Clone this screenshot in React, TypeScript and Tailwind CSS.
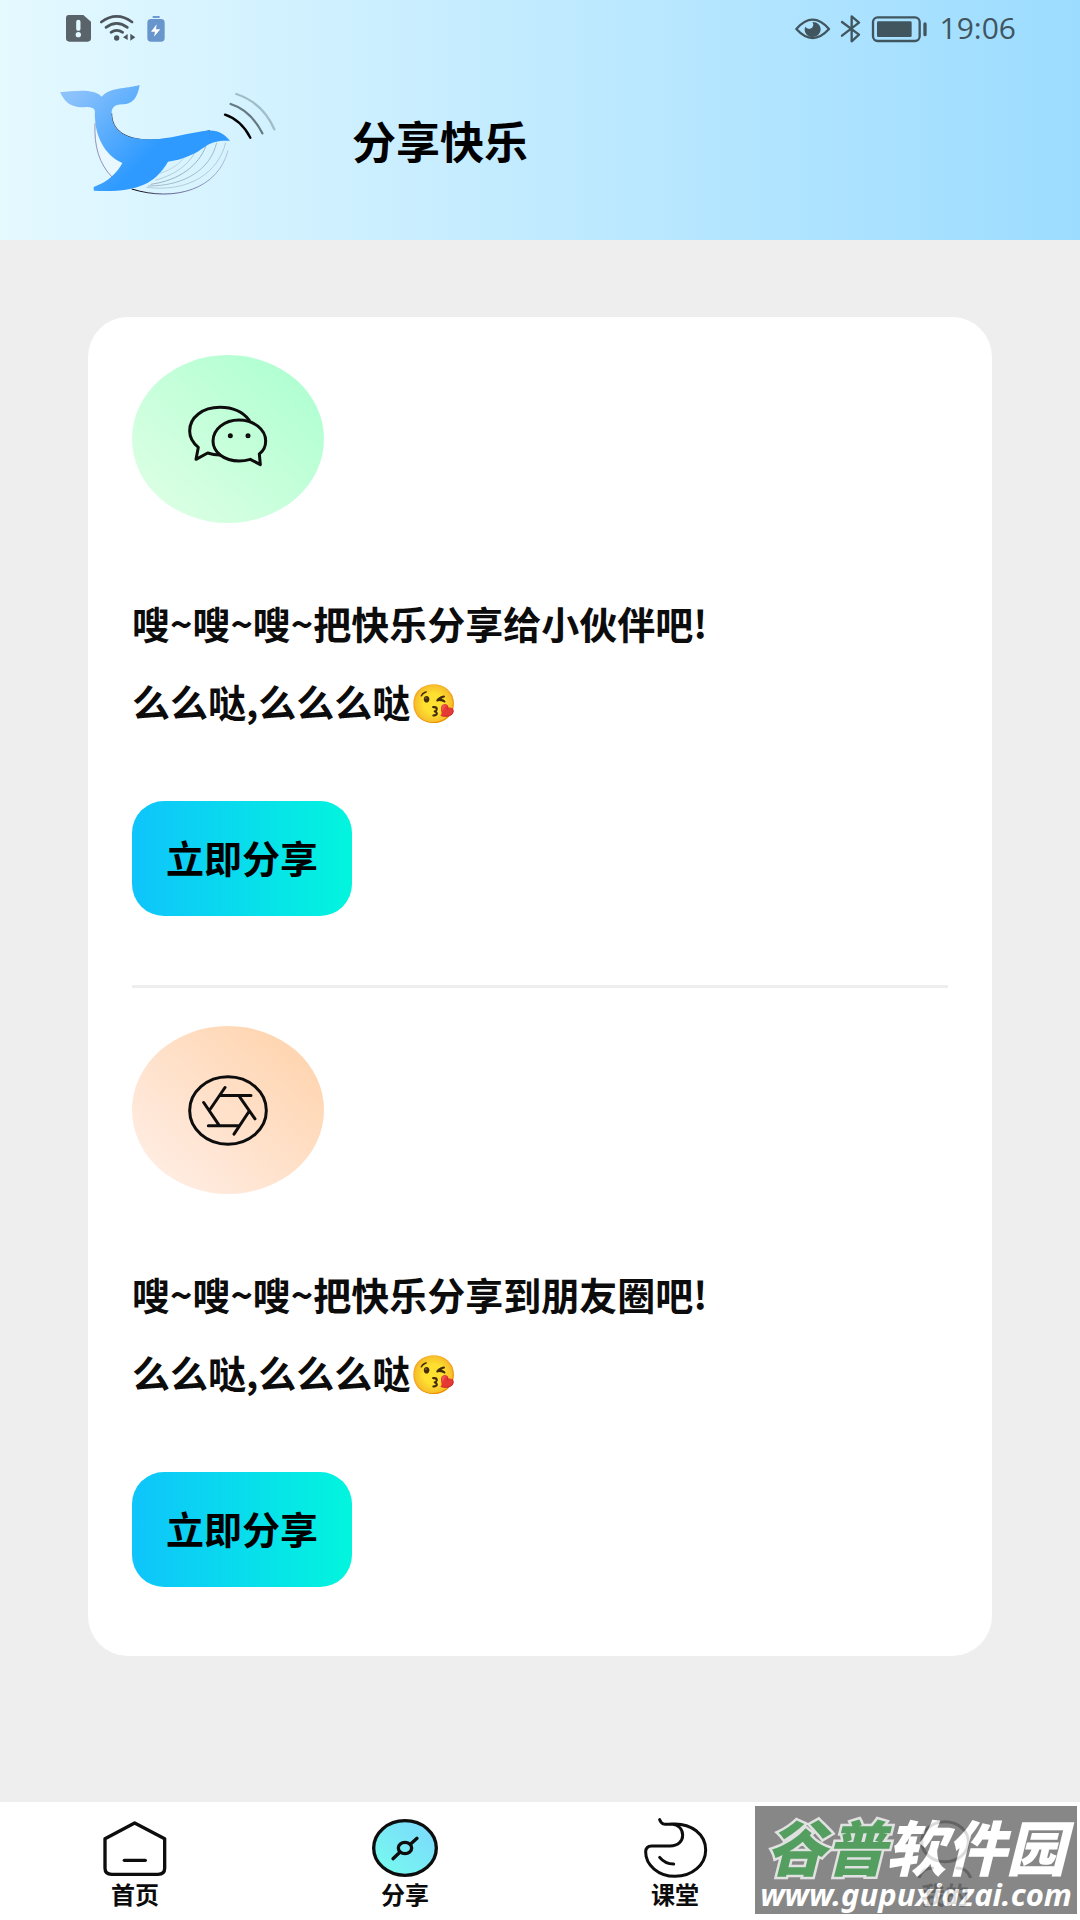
import type { ReactNode } from "react";

const INK = "#0d0d0d";

const posts = [
  {
    id: "friend",
    icon: <WechatIcon />,
    badge: "from-[#e2ffe6] to-[#a9ffcf]",
    lines: ["嗖~嗖~嗖~把快乐分享给小伙伴吧!", "么么哒,么么么哒😘"],
  },
  {
    id: "moments",
    icon: <ApertureIcon />,
    badge: "from-[#fff0ea] to-[#ffd1a8]",
    lines: ["嗖~嗖~嗖~把快乐分享到朋友圈吧!", "么么哒,么么么哒😘"],
  },
];

const tabs = [
  { label: "首页", icon: <HomeIcon /> },
  { label: "分享", icon: <CompassIcon />, active: true },
  { label: "课堂", icon: <ClassIcon /> },
  { label: "我的", icon: <UserIcon /> },
];

export default function App() {
  return (
    <div className="flex min-h-screen flex-col bg-[#eee] font-['Noto_Sans_CJK_SC',sans-serif] text-[#0c0c0c]">
      <header className="bg-linear-to-r/srgb from-[#e5f9ff] to-[#9cdcff] pb-11">
        <StatusBar />
        <div className="flex items-center pt-7 pl-15">
          <WhaleLogo />
          <h1 className="ml-19 text-[44px] leading-none font-bold text-black">分享快乐</h1>
        </div>
      </header>

      <main className="px-22 pt-[77px] pb-20">
        <div className="divide-y-3 divide-[#eee] rounded-[40px] bg-white px-11">
          {posts.map((p) => (
            <Post key={p.id} icon={p.icon} badge={p.badge} lines={p.lines} />
          ))}
        </div>
      </main>

      <nav className="relative mt-auto grid grid-cols-4 bg-white">
        {tabs.map((t) => (
          <a
            key={t.label}
            href="#"
            aria-current={t.active ? "page" : undefined}
            className="flex flex-col items-center gap-0.5 pt-4 pb-3 text-2xl leading-7 font-bold"
          >
            {t.icon}
            {t.label}
          </a>
        ))}
        <Watermark />
      </nav>
    </div>
  );
}

function Post({ icon, badge, lines }: { icon: ReactNode; badge: string; lines: string[] }) {
  return (
    <section className="flex flex-col items-start pt-[38px] pb-[69px]">
      <div
        className={`flex h-42 w-48 items-center justify-center rounded-[50%] bg-linear-to-tr/srgb ${badge}`}
      >
        {icon}
      </div>
      <div className="mt-[61px] text-[38px] leading-[78px] font-bold">
        {lines.map((l) => (
          <p key={l}>{l}</p>
        ))}
      </div>
      <button
        type="button"
        className="mt-[61px] h-[115px] w-55 rounded-[32px] bg-linear-to-r/srgb from-[#0fc4fb] to-[#02f5de] pb-1 text-[38px] font-bold text-black"
      >
        立即分享
      </button>
    </section>
  );
}

function StatusBar() {
  return (
    <div className="flex h-14 items-center justify-between pr-16 pl-16">
      <svg viewBox="72 36 312 96" className="h-8 w-26" fill="none">
        <path
          d="M86 45h44l23 20v50q0 10-10 10H88q-10 0-10-10V54q0-9 8-9z"
          fill="#596369"
        />
        <path d="M115 66v20" stroke="#e2f7ff" strokeWidth="13" strokeLinecap="round" />
        <circle cx="115" cy="104" r="8" fill="#e2f7ff" />
        <g stroke="#4b555b" strokeWidth="8" strokeLinecap="round">
          <path d="M184 66q46-34 92 0" />
          <path d="M198 82q32-24 64 0" />
          <path d="M213 97q17-12 35 0" />
        </g>
        <circle cx="230" cy="114" r="8" fill="#4b555b" />
        <path d="M249 112l14-10v18zM271 101l15 11-15 10z" fill="#4b555b" />
        <path d="M338 48h21v6h-21z" fill="#6c9bd0" />
        <rect x="322" y="57" width="52" height="68" rx="11" fill="#6795cc" />
        <path d="M350 73l-17 22h12l-3 15 19-22h-13z" fill="#fff" />
      </svg>
      <div className="flex items-center gap-3 text-[#41555f]">
        <svg viewBox="39 42 402 87" className="h-[29px] w-[134px]" fill="none" stroke="currentColor">
          <path d="M46 87q49-56 98 0-49 54-98 0z" strokeWidth="7" strokeLinejoin="round" />
          <path
            d="M94 66c14-1 25 9 25 22s-11 23-24 23-24-10-24-22c0-3 1-7 3-9 4 8 17 8 21 0 3-5 2-10-1-14z"
            fill="currentColor"
            stroke="none"
          />
          <path
            d="M183 66l51 38-22 20V49l22 19-51 39"
            strokeWidth="7"
            strokeLinecap="round"
            strokeLinejoin="round"
          />
          <rect x="276" y="52" width="140" height="71" rx="14" strokeWidth="7" />
          <rect x="288" y="64" width="104" height="47" rx="4" fill="currentColor" stroke="none" />
          <path d="M432 72v32" strokeWidth="10" strokeLinecap="round" />
        </svg>
        <span className="font-['Open_Sans',sans-serif] text-[30px] leading-8">19:06</span>
      </div>
    </div>
  );
}

function WhaleLogo() {
  return (
    <svg viewBox="60 42 648 336" className="h-28 w-54" fill="none">
      <defs>
        <linearGradient id="whale" x1="120" y1="50" x2="330" y2="250" gradientUnits="userSpaceOnUse">
          <stop offset="0" stopColor="#8cc2fb" />
          <stop offset="1" stopColor="#2e9aff" />
        </linearGradient>
        <linearGradient id="belly" x1="280" y1="360" x2="565" y2="240" gradientUnits="userSpaceOnUse">
          <stop offset="0" stopColor="#000" />
          <stop offset="0.25" stopColor="#5a5a8a" />
          <stop offset="1" stopColor="#b8c4e4" />
        </linearGradient>
      </defs>
      <path d="M165 150c-2 70 8 120 52 172l32-42c-42-22-70-70-84-130z" fill="#e9f7ff" />
      <path d="M165 160c-3 68 12 122 52 162" stroke="#8f93b8" strokeWidth="3" />
      <path d="M275 357c130 40 260 0 289-116" stroke="url(#belly)" strokeWidth="3" />
      <g stroke="#8ea3b2" strokeWidth="3">
        <path d="M557 218c-22 90-110 150-238 134" opacity=".5" />
        <path d="M530 218c-18 76-90 130-206 130" opacity=".7" />
        <path d="M498 227c-22 60-80 104-166 116" opacity=".8" />
        <path d="M468 243c-24 42-60 70-122 88" opacity=".5" />
        <path d="M436 258c-20 26-40 40-76 52" opacity=".4" />
      </g>
      <path d="M215 130c0 50 40 79 115 80 70 0 120-16 180-28" stroke="#26344a" strokeWidth="3" />
      <path
        d="M60 67c46-5 102-12 125 13 27-30 70-22 114-35-6 38-22 58-50 58-30 0-36 14-34 34 4 48 44 71 113 71 60 0 118-20 170-26 36-4 56 10 72 31-60-4-74 20-100 34-28 14-54 25-86 28-42 72-100 92-222 87-1 0 0 0 0 0-1 0-1-12-1-11 44-16 70-42 86-72-56-24-80-84-82-134-2-24 8-32-28-34-44 4-64-16-77-46z"
        fill="url(#whale)"
      />
      <g strokeWidth="7" strokeLinecap="round">
        <path d="M555 134c36 12 58 34 76 69" stroke="#000" />
        <path d="M572 102c44 14 74 46 95 88" stroke="#667a84" />
        <path d="M589 72c54 18 92 56 114 106" stroke="#a0bdca" />
      </g>
    </svg>
  );
}

function WechatIcon() {
  return (
    <svg
      viewBox="328 286 238 204"
      className="h-17 w-20"
      fill="none"
      stroke={INK}
      strokeWidth="9"
      strokeLinecap="round"
      strokeLinejoin="round"
    >
      <path d="M511 332c-20-26-52-39-88-39-52 0-91 30-91 71 0 18 10 36 26 49l-7 36 35-19q18 6 36 6" />
      <path d="M480 331c-44 0-78 28-78 63 0 34 34 60 78 60 12 0 24-2 34-5l30 16-3-32c12-9 19-24 19-39 0-35-36-63-80-63z" />
      <circle cx="454" cy="378" r="3" fill={INK} />
      <circle cx="507" cy="378" r="3" fill={INK} />
    </svg>
  );
}

function ApertureIcon() {
  return (
    <svg
      viewBox="204 194 240 212"
      className="h-[71px] w-20"
      fill="none"
      stroke={INK}
      strokeWidth="9"
      strokeLinecap="round"
    >
      <ellipse cx="324" cy="300" rx="115" ry="101" />
      <path d="M315 231l-45 66M393 255h-91M405 325l-46-66M342 371l45-68M265 346h89M251 276l46 68" />
    </svg>
  );
}

function HomeIcon() {
  return (
    <svg
      viewBox="125 84 200 180"
      className="h-15 w-17"
      fill="none"
      stroke={INK}
      strokeWidth="10"
      strokeLinecap="round"
      strokeLinejoin="round"
    >
      <path d="M224 99l90 47v89q0 18-20 18H155q-20 0-20-18v-89z" />
      <path d="M193 211h63" />
    </svg>
  );
}

function CompassIcon() {
  return (
    <svg
      viewBox="934 84 200 180"
      className="h-15 w-17"
      fill="none"
      stroke={INK}
      strokeWidth="10"
      strokeLinecap="round"
    >
      <defs>
        <linearGradient id="compass" x1="0" y1="1" x2="1" y2="0">
          <stop offset="0" stopColor="#76fdec" />
          <stop offset="1" stopColor="#7cd6ff" />
        </linearGradient>
      </defs>
      <ellipse cx="1034" cy="174" rx="94" ry="82" fill="url(#compass)" />
      <ellipse cx="1034" cy="174" rx="20" ry="17" />
      <path d="M1051 162l19-17M1017 188l-19 18" />
    </svg>
  );
}

function ClassIcon() {
  return (
    <svg
      viewBox="125 84 200 180"
      className="h-15 w-17"
      fill="none"
      stroke={INK}
      strokeWidth="9"
      strokeLinecap="round"
      strokeLinejoin="round"
    >
      <path d="M179 89c6 16 18 15 36 13 60-4 102 32 102 78 0 44-40 79-92 79-50 0-88-34-88-73 0-12 6-18 18-18h55c24 0 38-14 38-32 0-18-12-32-33-34" />
      <path d="M179 202q16 20 42 20" />
    </svg>
  );
}

function UserIcon() {
  return (
    <svg
      viewBox="934 84 200 180"
      className="h-15 w-17"
      fill="none"
      stroke={INK}
      strokeWidth="9"
      strokeLinecap="round"
    >
      <ellipse cx="1034" cy="155" rx="70" ry="60" />
      <path d="M957 262q10-28 40-28M1110 262q-10-28-40-28" />
    </svg>
  );
}

function Watermark() {
  return (
    <div className="pointer-events-none absolute top-1 right-[3px] flex h-27 w-[322px] flex-col items-center justify-center bg-[#737373] pt-1.5 opacity-85">
      <span className="text-[60px] leading-[62px] font-black whitespace-nowrap text-white italic">
        <span className="text-[#378f44] [-webkit-text-stroke:5px_#dcdcdc] [paint-order:stroke_fill]">
          谷普
        </span>
        软件园
      </span>
      <span className="font-['Noto_Sans',sans-serif] text-[31px] leading-9 font-bold whitespace-nowrap text-white italic">
        www.gupuxiazai.com
      </span>
    </div>
  );
}
